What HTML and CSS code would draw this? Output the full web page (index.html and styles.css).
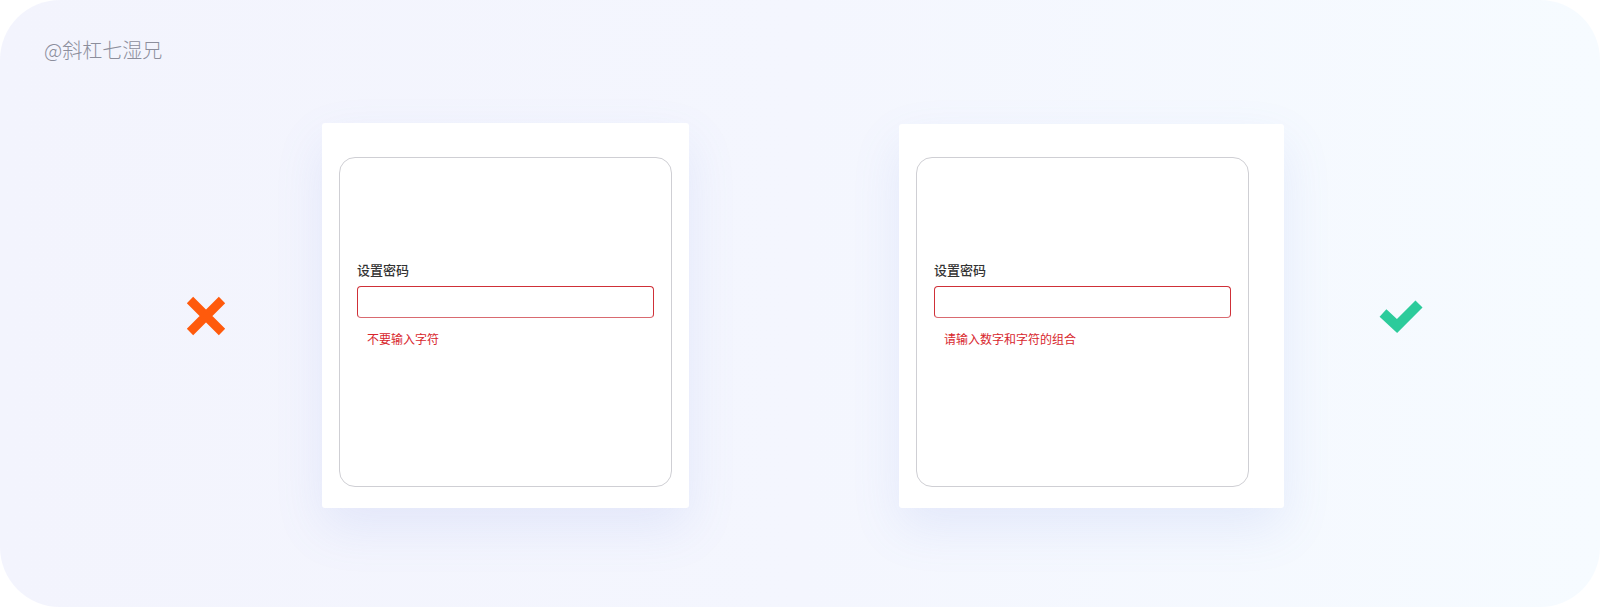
FILE: index.html
```html
<!DOCTYPE html>
<html lang="zh-CN">

<head>
    <meta charset="UTF-8">
    <meta name="viewport" content="width=device-width, initial-scale=1.0">
    <title>密码提示对比</title>
    <link rel="stylesheet" href="styles.css">
</head>

<body>
    <div class="panel">
        <div class="watermark">@斜杠七湿兄</div>

        <div class="compare">
            <svg class="mark mark-bad" width="40" height="40" viewBox="0 0 40 40">
                <path d="M4 4 L36 36 M36 4 L4 36" stroke="#ff5a0c" stroke-width="9" fill="none" />
            </svg>

            <div class="card card-left">
                <div class="form-box">
                    <div class="field-label">设置密码</div>
                    <div class="field-input"></div>
                    <div class="field-error">不要输入字符</div>
                </div>
            </div>

            <div class="card card-right">
                <div class="form-box">
                    <div class="field-label">设置密码</div>
                    <div class="field-input"></div>
                    <div class="field-error">请输入数字和字符的组合</div>
                </div>
            </div>

            <svg class="mark mark-good" width="44" height="34" viewBox="0 0 44 34">
                <path d="M4 14 L18 27 L40 5" stroke="#2ccb9b" stroke-width="10" fill="none" />
            </svg>
        </div>
    </div>
</body>

</html>
```

FILE: styles.css
```css
* {
    margin: 0;
    padding: 0;
    box-sizing: border-box;
}

body {
    background: #fff;
    font-family: "Noto Sans CJK SC", "Noto Sans", sans-serif;
}

.panel {
    width: 1600px;
    height: 607px;
    border-radius: 60px;
    overflow: hidden;
    background: linear-gradient(90deg, #f3f4fd 0%, #f4f6fe 50%, #f6fbff 100%);
}

.watermark {
    padding: 36px 0 0 44px;
    font-size: 20px;
    line-height: 28px;
    font-weight: 300;
    color: #8c8e9c;
}

.compare {
    display: flex;
    align-items: center;
    margin-top: 59px;
    padding-left: 186px;
}

.mark {
    flex: none;
}

.mark-bad {
    margin-right: 96px;
}

.mark-good {
    margin-left: 95px;
}

.card {
    background: #fff;
    border-radius: 3px;
    box-shadow: 0 20px 50px rgba(110, 130, 225, 0.12);
}

.card-left {
    width: 367px;
    height: 385px;
    padding: 34px 17px 0 17px;
}

.card-right {
    width: 385px;
    height: 384px;
    margin-left: 210px;
    padding: 33px 35px 0 17px;
}

.form-box {
    height: 330px;
    border: 1px solid #cfcfd4;
    border-radius: 16px;
    background: #fff;
    padding: 103px 17px 0 17px;
}

.field-label {
    font-size: 13px;
    line-height: 18px;
    font-weight: 500;
    color: #333;
}

.field-input {
    height: 32px;
    margin-top: 7px;
    border: 1.5px solid #cf3038;
    border-bottom-color: #d96a70;
    border-radius: 4px;
}

.field-error {
    margin-top: 12px;
    padding-left: 10px;
    font-size: 12px;
    line-height: 18px;
    color: #d8262d;
}
```
